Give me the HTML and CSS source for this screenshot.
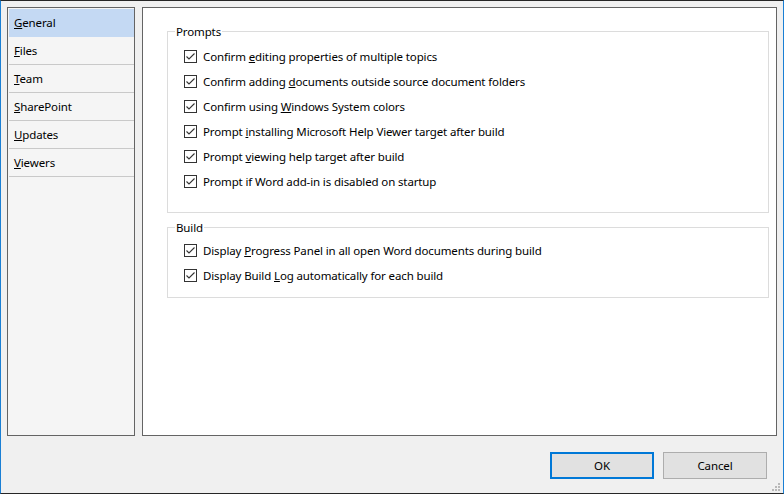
FILE: index.html
```html
<!DOCTYPE html>
<html>
<head>
<meta charset="utf-8">
<link rel="stylesheet" href="styles.css">
</head>
<body>
<div class="window">
  <div class="main">
    <ul class="nav">
      <li class="nav-item selected"><u>G</u>eneral</li>
      <li class="nav-item"><u>F</u>iles</li>
      <li class="nav-item"><u>T</u>eam</li>
      <li class="nav-item"><u>S</u>harePoint</li>
      <li class="nav-item"><u>U</u>pdates</li>
      <li class="nav-item"><u>V</u>iewers</li>
    </ul>
    <div class="page">
      <fieldset class="group prompts">
        <legend>Prompts</legend>
        <label class="check"><span class="box"><svg width="11" height="11" viewBox="0 0 11 11"><path d="M1.5 5.5 L4 8 L9.5 2.5" fill="none" stroke="#333" stroke-width="1.1"/></svg></span><span>Confirm <u>e</u>diting properties of multiple topics</span></label>
        <label class="check"><span class="box"><svg width="11" height="11" viewBox="0 0 11 11"><path d="M1.5 5.5 L4 8 L9.5 2.5" fill="none" stroke="#333" stroke-width="1.1"/></svg></span><span>Confirm adding <u>d</u>ocuments outside source document folders</span></label>
        <label class="check"><span class="box"><svg width="11" height="11" viewBox="0 0 11 11"><path d="M1.5 5.5 L4 8 L9.5 2.5" fill="none" stroke="#333" stroke-width="1.1"/></svg></span><span>Confirm using <u>W</u>indows System colors</span></label>
        <label class="check"><span class="box"><svg width="11" height="11" viewBox="0 0 11 11"><path d="M1.5 5.5 L4 8 L9.5 2.5" fill="none" stroke="#333" stroke-width="1.1"/></svg></span><span>Prompt <u>i</u>nstalling Microsoft Help Viewer target after build</span></label>
        <label class="check"><span class="box"><svg width="11" height="11" viewBox="0 0 11 11"><path d="M1.5 5.5 L4 8 L9.5 2.5" fill="none" stroke="#333" stroke-width="1.1"/></svg></span><span>Prompt <u>v</u>iewing help target after build</span></label>
        <label class="check"><span class="box"><svg width="11" height="11" viewBox="0 0 11 11"><path d="M1.5 5.5 L4 8 L9.5 2.5" fill="none" stroke="#333" stroke-width="1.1"/></svg></span><span>Prompt if Word add-in is disabled on startup</span></label>
      </fieldset>
      <fieldset class="group build">
        <legend>Build</legend>
        <label class="check"><span class="box"><svg width="11" height="11" viewBox="0 0 11 11"><path d="M1.5 5.5 L4 8 L9.5 2.5" fill="none" stroke="#333" stroke-width="1.1"/></svg></span><span>Display <u>P</u>rogress Panel in all open Word documents during build</span></label>
        <label class="check"><span class="box"><svg width="11" height="11" viewBox="0 0 11 11"><path d="M1.5 5.5 L4 8 L9.5 2.5" fill="none" stroke="#333" stroke-width="1.1"/></svg></span><span>Display Build <u>L</u>og automatically for each build</span></label>
      </fieldset>
    </div>
  </div>
  <div class="footer">
    <button class="btn default">OK</button>
    <button class="btn">Cancel</button>
  </div>
  <svg class="grip" width="9" height="9" viewBox="0 0 9 9">
    <rect x="6" y="0" width="2" height="2" fill="#b8b8b8"/>
    <rect x="3" y="3" width="2" height="2" fill="#b8b8b8"/>
    <rect x="6" y="3" width="2" height="2" fill="#b8b8b8"/>
    <rect x="0" y="6" width="2" height="2" fill="#b8b8b8"/>
    <rect x="3" y="6" width="2" height="2" fill="#b8b8b8"/>
    <rect x="6" y="6" width="2" height="2" fill="#b8b8b8"/>
  </svg>
</div>
</body>
</html>
```

FILE: styles.css
```css
html, body {
  margin: 0;
  padding: 0;
  background: #f0f0f0;
}

body {
  font-family: "Noto Sans", "Open Sans", sans-serif;
  font-size: 11.5px;
  letter-spacing: -0.13px;
  color: #000;
}

.window {
  position: relative;
  width: 784px;
  height: 494px;
  box-sizing: border-box;
  border-left: 1px solid #1a7fd4;
  border-right: 1px solid #1a7fd4;
  border-top: 1px solid #262626;
  border-bottom: 1px solid #262626;
  padding: 6px 6px 0 6px;
  display: flex;
  flex-direction: column;
  background: #f0f0f0;
}

.main {
  display: flex;
  gap: 7px;
  height: 429px;
}

.nav {
  width: 128px;
  box-sizing: border-box;
  margin: 0;
  padding: 1px 0 0 1px;
  list-style: none;
  border: 1px solid #646464;
  background: #f5f5f5;
}

.nav-item {
  height: 27px;
  line-height: 28px;
  padding-left: 5px;
  border-bottom: 1px solid #c9c9c9;
}

.nav-item.selected {
  background: #c4d9f3;
  border-bottom-color: #c4d9f3;
}

.page {
  flex: 1;
  box-sizing: border-box;
  border: 1px solid #646464;
  background: #fff;
  padding-top: 14px;
}

.group {
  margin: 0 7px 0 24px;
  padding: 4px 0 18px 7px;
  border: 1px solid #dcdcdc;
  min-width: 0;
}

.group legend {
  padding: 2px 1px 0;
  line-height: 16px;
}

.group.build {
  margin-top: 5px;
  padding-top: 2px;
  padding-bottom: 9px;
}

.check {
  display: flex;
  align-items: center;
  height: 25px;
  padding-left: 9px;
}

.box {
  width: 11px;
  height: 11px;
  border: 1px solid #333;
  background: #fff;
  margin-right: 6px;
  display: flex;
  flex: none;
}

.box svg {
  display: block;
}

.footer {
  display: flex;
  justify-content: flex-end;
  gap: 9px;
  margin-top: 16px;
  padding-right: 10px;
}

.btn {
  width: 104px;
  height: 27px;
  box-sizing: border-box;
  background: #e1e1e1;
  border: 1px solid #adadad;
  font-family: inherit;
  font-size: 11.5px;
  letter-spacing: -0.13px;
  color: #000;
  padding: 0;
}

.btn.default {
  border: 2px solid #0078d7;
}

.grip {
  position: absolute;
  right: 2px;
  bottom: 1px;
}
```
